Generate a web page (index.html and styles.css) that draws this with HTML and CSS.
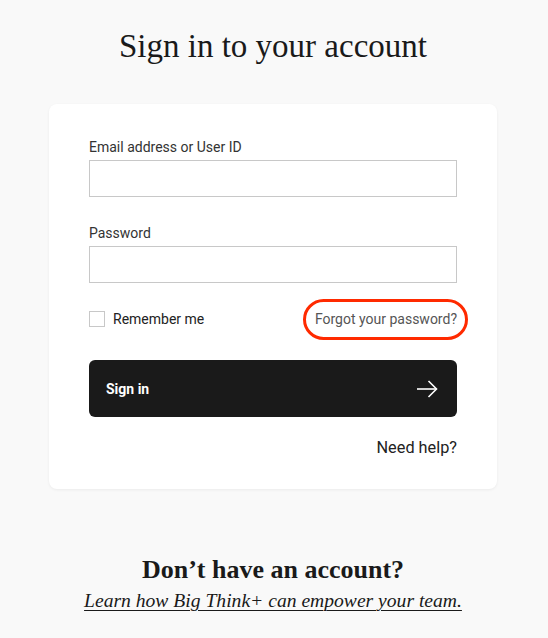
FILE: index.html
```html
<!DOCTYPE html>
<html lang="en">
<head>
<meta charset="utf-8">
<title>Sign in</title>
<link rel="stylesheet" href="styles.css">
</head>
<body>
<main class="page">
  <h1 class="title">Sign in to your account</h1>
  <form class="card">
    <label class="label" for="email">Email address or User ID</label>
    <input class="input" id="email" type="text">
    <label class="label label-gap" for="pw">Password</label>
    <input class="input" id="pw" type="password">
    <div class="row">
      <label class="remember"><span class="box"></span>Remember me</label>
      <a class="forgot" href="#">Forgot your password?<span class="ring"></span></a>
    </div>
    <button class="submit" type="button">
      <span>Sign in</span>
      <svg class="arrow" width="21" height="18" viewBox="0 0 21 18" fill="none" stroke="#fff" stroke-width="1.6">
        <path d="M0 9H19.5"/>
        <path d="M11.5 1L19.5 9L11.5 17"/>
      </svg>
    </button>
    <div class="help"><a href="#">Need help?</a></div>
  </form>
  <h2 class="noacct">Don’t have an account?</h2>
  <a class="learn" href="#">Learn how Big Think+ can empower your team.</a>
</main>
</body>
</html>
```

FILE: styles.css
```css
html, body {
  margin: 0;
  padding: 0;
  background: #f9f9f9;
}
.page {
  width: 448px;
  margin: 0 auto;
  display: flex;
  flex-direction: column;
  align-items: stretch;
  padding-top: 28px;
  position: relative;
  left: -1px;
}
.title {
  margin: 0;
  font-family: "Liberation Serif", serif;
  font-weight: 400;
  font-size: 33px;
  line-height: 36px;
  color: #1a1a1a;
  text-align: center;
}
.card {
  margin-top: 40px;
  background: #fff;
  border-radius: 8px;
  box-shadow: 0 1px 3px rgba(0,0,0,0.06);
  padding: 33px 40px 31px;
  display: flex;
  flex-direction: column;
  font-family: "Roboto", "Liberation Sans", sans-serif;
}
.label {
  font-size: 14px;
  line-height: 20px;
  color: #333;
  margin-bottom: 3px;
}
.label-gap {
  margin-top: 26px;
}
.input {
  box-sizing: border-box;
  height: 37px;
  width: 100%;
  border: 1px solid #c8c8c8;
  border-radius: 0;
  margin: 0;
  background: #fff;
}
.row {
  margin-top: 26px;
  height: 20px;
  display: flex;
  justify-content: space-between;
  align-items: center;
}
.remember {
  display: flex;
  align-items: center;
  font-size: 14px;
  color: #222;
}
.box {
  width: 16px;
  height: 16px;
  box-sizing: border-box;
  border: 1px solid #c8c8c8;
  margin-right: 8px;
}
.forgot {
  position: relative;
  font-size: 14px;
  line-height: 20px;
  color: #555;
  text-decoration: none;
}
.ring {
  position: absolute;
  top: -10px;
  bottom: -11px;
  left: -12px;
  right: -11px;
  border: 3px solid #ff2a00;
  border-radius: 22px;
}
.submit {
  margin-top: 31px;
  height: 57px;
  border: 0;
  border-radius: 6px;
  background: #1a1a1a;
  color: #fff;
  display: flex;
  align-items: center;
  justify-content: space-between;
  padding: 0 19px 0 17px;
  font-family: "Roboto", "Liberation Sans", sans-serif;
  font-size: 14px;
  font-weight: 700;
}
.help {
  margin-top: 21px;
  text-align: right;
  font-size: 16.3px;
  line-height: 20px;
}
.help a {
  color: #222;
  text-decoration: none;
}
.noacct {
  margin: 66px 0 0;
  font-family: "Liberation Serif", serif;
  font-weight: 700;
  font-size: 26px;
  line-height: 30px;
  color: #1a1a1a;
  text-align: center;
}
.learn {
  margin-top: 4px;
  font-family: "Liberation Serif", serif;
  font-style: italic;
  font-size: 19.6px;
  line-height: 24px;
  color: #1a1a1a;
  text-align: center;
  text-decoration: underline;
  text-underline-offset: 3px;
  text-decoration-thickness: 1px;
}
```
